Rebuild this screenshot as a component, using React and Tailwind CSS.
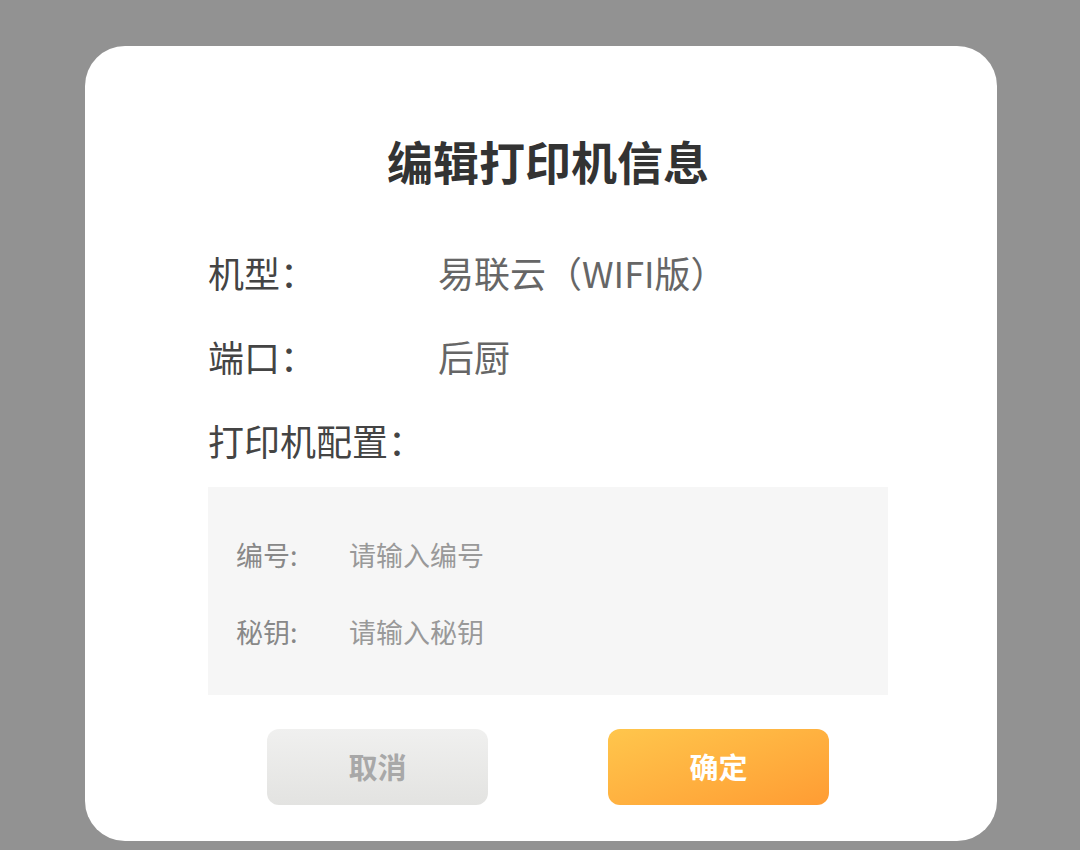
export default function App() {
  const font = { fontFamily: '"Noto Sans CJK SC", "Noto Sans", sans-serif' };
  return (
    <div className="w-[1080px] h-[850px] bg-[#929292] pt-[46px] pl-[85px] overflow-hidden" style={font}>
      <div className="w-[912px] h-[795px] bg-white rounded-[40px] pt-[86px] pl-[123px] pr-[109px] flex flex-col">
        <div className="h-[56px] flex items-center justify-center text-[46px] font-bold text-[#333333] leading-none">
          编辑打印机信息
        </div>
        <div className="mt-[42px] flex flex-col text-[36px] leading-none">
          <div className="h-[84px] flex items-center">
            <span className="w-[230px] text-[#444444]">机型：</span>
            <span className="text-[#666666]">易联云（WIFI版）</span>
          </div>
          <div className="h-[84px] flex items-center">
            <span className="w-[230px] text-[#444444]">端口：</span>
            <span className="text-[#666666]">后厨</span>
          </div>
          <div className="h-[84px] flex items-center">
            <span className="text-[#444444]">打印机配置：</span>
          </div>
        </div>
        <div className="mt-[5px] w-[680px] h-[208px] bg-[#f6f6f6] pt-[29px] pl-[28px] flex flex-col text-[27px] leading-none">
          <div className="h-[77px] flex items-center">
            <span className="w-[113px] text-[#888888]">编号:</span>
            <span className="text-[#999999]">请输入编号</span>
          </div>
          <div className="h-[77px] flex items-center">
            <span className="w-[113px] text-[#888888]">秘钥:</span>
            <span className="text-[#999999]">请输入秘钥</span>
          </div>
        </div>
        <div className="mt-[34px] flex justify-center gap-[120px]">
          <div className="w-[221px] h-[76px] rounded-[12px] bg-gradient-to-b from-[#f0f0ef] to-[#e3e3e1] flex items-center justify-center text-[29px] font-bold text-[#a8a8a8]">
            取消
          </div>
          <div className="w-[221px] h-[76px] rounded-[12px] bg-gradient-to-br from-[#ffc64c] to-[#ff9c33] flex items-center justify-center text-[29px] font-bold text-white">
            确定
          </div>
        </div>
      </div>
    </div>
  );
}
